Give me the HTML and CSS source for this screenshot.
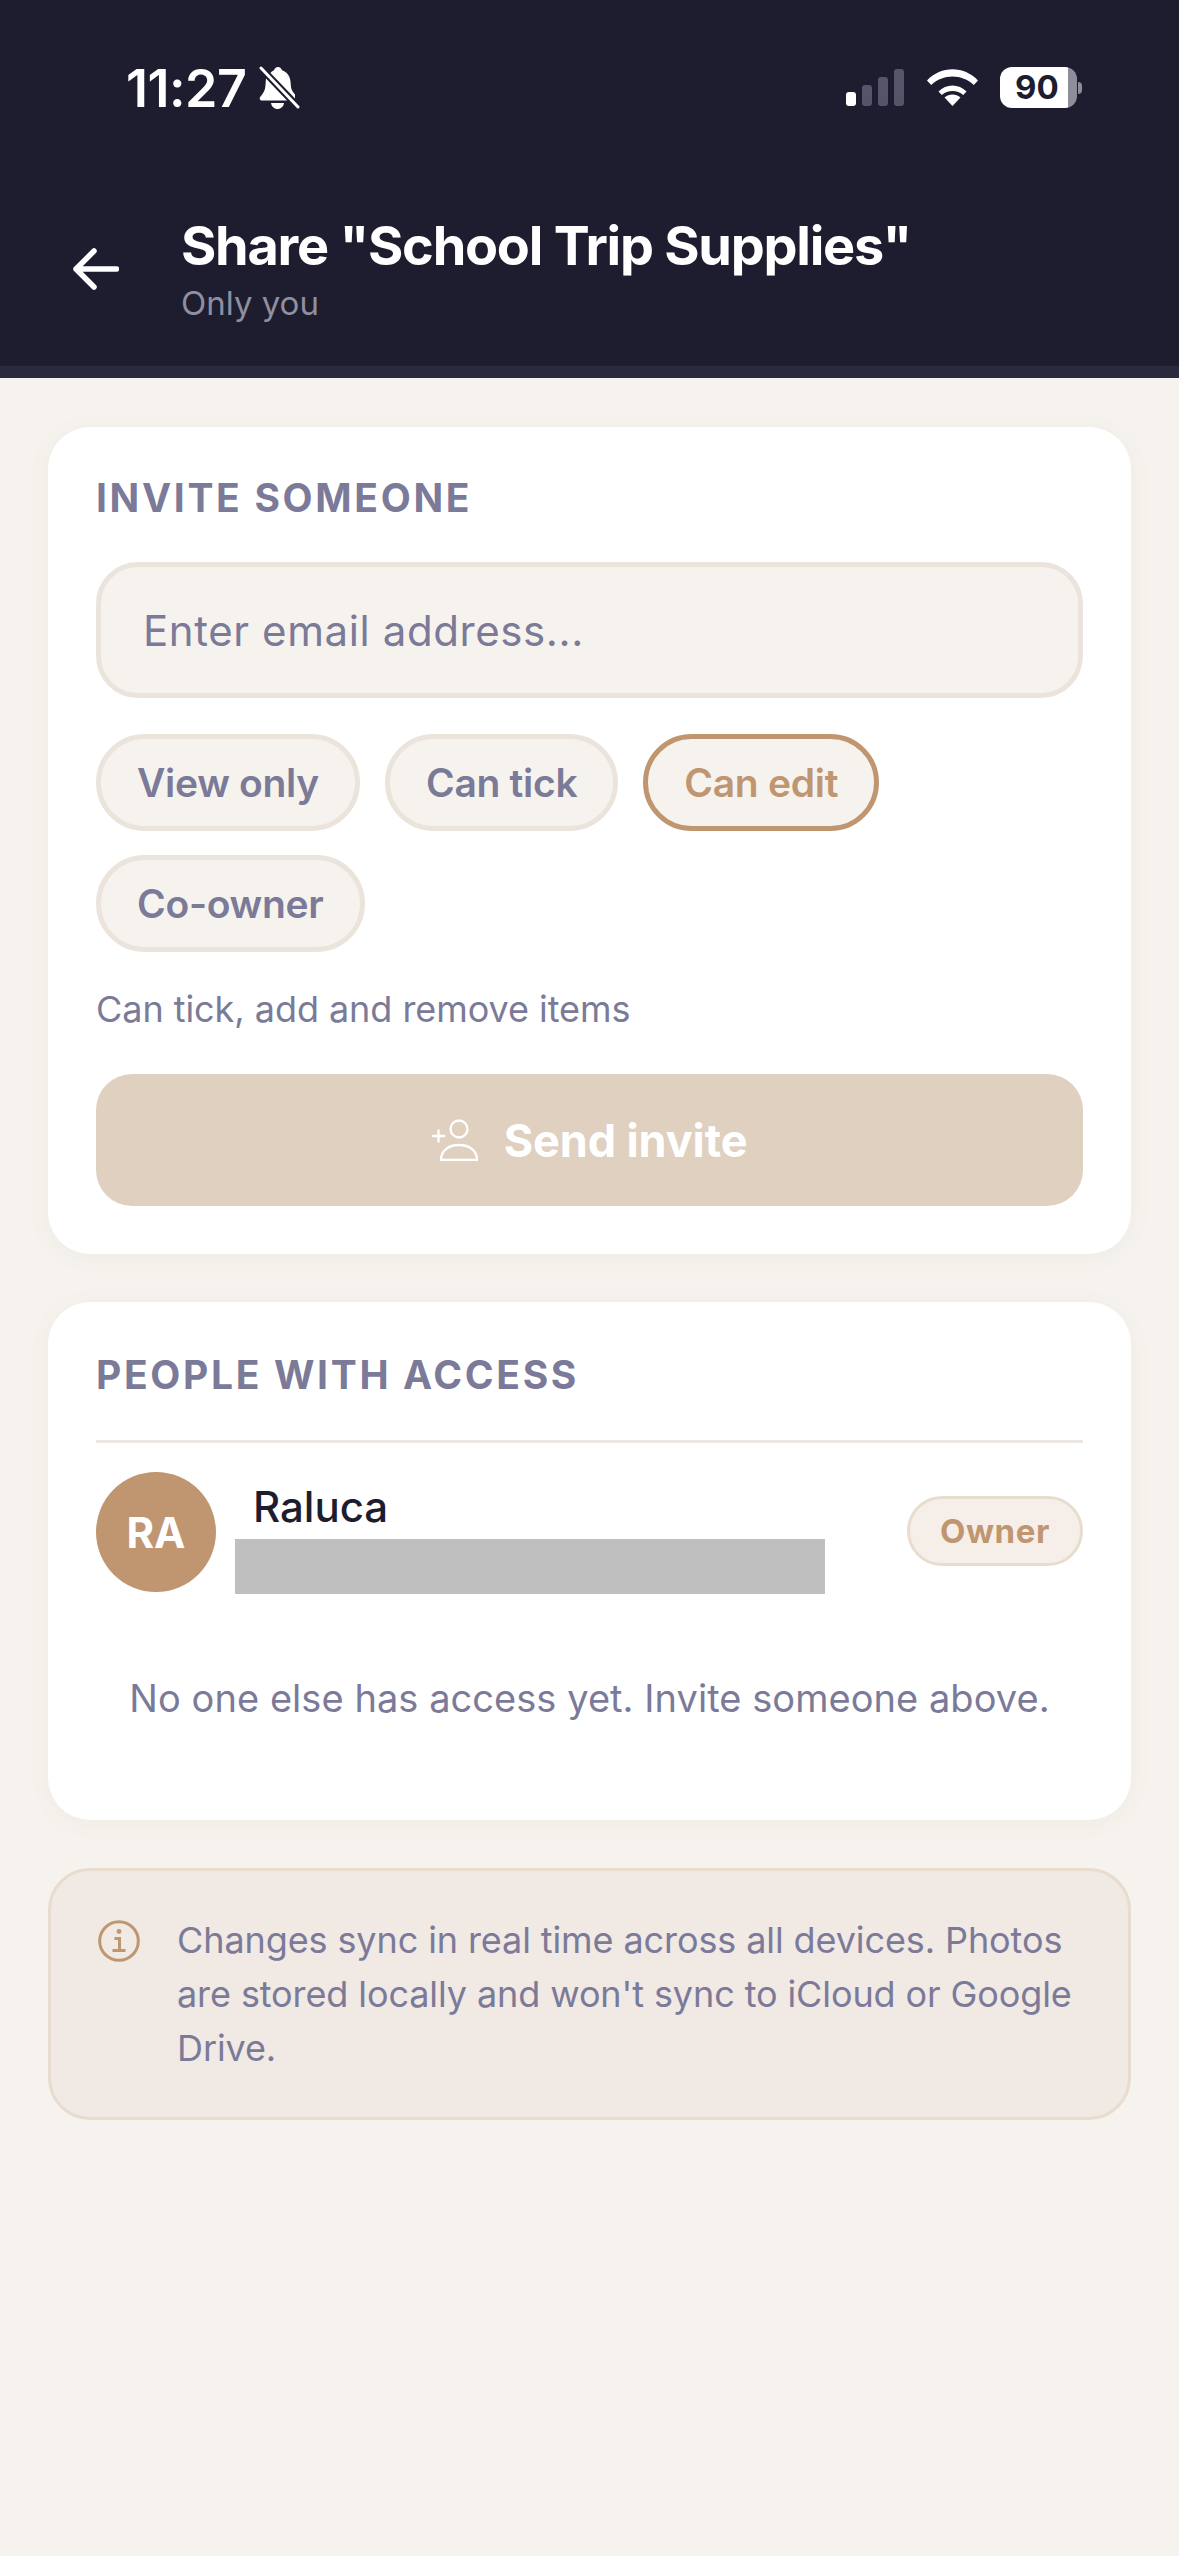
FILE: index.html
```html
<!DOCTYPE html>
<html lang="en">
<head>
<meta charset="utf-8">
<title>Share</title>
<link rel="stylesheet" href="styles.css">
</head>
<body>
<header class="top">
  <div class="status">
    <div class="status-left">
      <span class="time">11:27</span>
      <svg class="bell" width="42" height="44" viewBox="0 0 42 44">
        <path d="M12.500 7C13.500 5.500 15 4.600 16 4.200 16.500 2.400 18 1 20 1c2 0 3.500 1.400 4 3.200C29 5.800 32 10 32.500 15.500L33 21c.3 3 2 5 4 7.500v4z" fill="#fff"/>
        <path d="M8 12.500 29 34.500H4c-2 0-3-2-1.800-3.500C5 27.500 7 25 7.400 20z" fill="#fff"/>
        <path d="M13 37h13c-.5 3.500-3.200 6-6.500 6s-6-2.500-6.500-6z" fill="#fff"/>
        <path d="M3 2 40 41" stroke="#fff" stroke-width="3" stroke-linecap="round"/>
      </svg>
    </div>
    <div class="status-right">
      <div class="signal">
        <span class="bar b1 on"></span><span class="bar b2"></span><span class="bar b3"></span><span class="bar b4"></span>
      </div>
      <svg class="wifi" width="51" height="37" viewBox="0 0 51 37">
        <path d="M25.500 37 L17.500 28.500 C22 24.500 29 24.500 33.500 28.500Z" fill="#fff"/>
        <path d="M11.500 22.500 L14.800 26 C20.500 20.500 30.500 20.500 36.200 26 L39.500 22.500 C32 14.500 19 14.500 11.500 22.500Z" fill="#fff"/>
        <path d="M0 11.500 L4.200 16 C16 4.500 35 4.500 46.800 16 L51 11.500 C37 -3.500 14 -3.500 0 11.500Z" fill="#fff"/>
      </svg>
      <div class="battery"><span class="batt-body"><span class="batt-num">90</span></span><span class="batt-tip"></span></div>
    </div>
  </div>
  <div class="nav">
    <svg class="back" width="46" height="42" viewBox="0 0 46 42">
      <path d="M43.500 21H3M21 3 3 21l18 18" fill="none" stroke="#fff" stroke-width="5.500" stroke-linecap="round" stroke-linejoin="round"/>
    </svg>
    <div class="nav-text">
      <div class="title">Share "School Trip Supplies"</div>
      <div class="subtitle">Only you</div>
    </div>
  </div>
</header>
<main class="content">
  <section class="card invite">
    <h2 class="label">INVITE SOMEONE</h2>
    <div class="input">Enter email address...</div>
    <div class="chips">
      <span class="chip">View only</span>
      <span class="chip">Can tick</span>
      <span class="chip active">Can edit</span>
      <span class="chip">Co-owner</span>
    </div>
    <p class="hint">Can tick, add and remove items</p>
    <div class="send">
      <svg class="send-icon" width="46" height="42" viewBox="0 0 46 42" fill="none" stroke="#fff" stroke-width="2.400">
        <circle cx="27" cy="10" r="8.500"/>
        <path d="M9 41c0-9 7-15 18-15s18 6 18 15z" stroke-linejoin="round"/>
        <path d="M1 17h11M6.500 11.500v11" stroke-linecap="round"/>
      </svg>
      <span>Send invite</span>
    </div>
  </section>
  <section class="card people">
    <h2 class="label">PEOPLE WITH ACCESS</h2>
    <div class="person">
      <div class="avatar">RA</div>
      <div class="person-name">Raluca</div>
      <div class="redacted"></div>
      <span class="badge">Owner</span>
    </div>
    <p class="empty">No one else has access yet. Invite someone above.</p>
  </section>
  <aside class="note">
    <svg class="info" width="42" height="42" viewBox="0 0 42 42" fill="none" stroke="#c09670">
      <circle cx="21" cy="21" r="19.300" stroke-width="3"/>
      <circle cx="21" cy="11.500" r="2.400" fill="#c09670" stroke="none"/>
      <path d="M16.500 18.500h5v12M14.500 30.500h13" stroke-width="3"/>
    </svg>
    <p class="note-text">Changes sync in real time across all devices. Photos are stored locally and won't sync to iCloud or Google Drive.</p>
  </aside>
</main>
</body>
</html>
```
FILE: styles.css
```css
* { box-sizing: border-box; }
html, body { margin: 0; padding: 0; }
body {
  width: 1179px;
  height: 2556px;
  background: #f6f3ee;
  font-family: Inter, "Liberation Sans", sans-serif;
  overflow: hidden;
}
.top {
  height: 378px;
  background: #1d1d2f;
  border-bottom: 12px solid #2a2a3d;
  color: #fff;
}
.status {
  display: flex;
  justify-content: space-between;
  align-items: flex-start;
  padding: 67px 97px 0 126px;
  height: 190px;
}
.status-left { display: flex; align-items: center; gap: 12px; }
.time { font-size: 52px; font-weight: 600; line-height: 44px; letter-spacing: -.5px; }
.bell { margin-top: -2px; }
.status-right { display: flex; align-items: flex-start; }
.signal { display: flex; align-items: flex-end; gap: 6px; height: 37px; margin-top: 2px; margin-right: 23px; }
.bar { width: 10px; border-radius: 3px; background: #55556a; }
.bar.on { background: #fff; }
.b1 { height: 14px; }
.b2 { height: 21px; }
.b3 { height: 29px; }
.b4 { height: 37px; }
.wifi { margin-top: 2px; margin-right: 22px; }
.battery { display: flex; align-items: center; height: 41px; }
.batt-body {
  width: 77px;
  height: 41px;
  border-radius: 12px;
  background: linear-gradient(to right, #fff 0, #fff 68px, #8e8e9b 68px);
  display: flex;
  align-items: center;
  padding-left: 15px;
}
.batt-num { font-size: 33px; font-weight: 700; color: #1d1d2f; line-height: 41px; }
.batt-tip { width: 4px; height: 12px; margin-left: 1px; border-radius: 0 6px 6px 0; background: #8e8e9b; }
.nav { display: flex; align-items: flex-start; padding-left: 73px; }
.back { margin-top: 58px; flex: none; }
.nav-text { margin-left: 62px; }
.title { font-size: 54px; font-weight: 700; line-height: 66px; letter-spacing: -1.250px; white-space: nowrap; margin-top: 23px; }
.subtitle { font-size: 33px; line-height: 42px; color: #8f8f9f; margin-top: 3px; }
.content { display: flex; flex-direction: column; gap: 48px; padding: 49px 48px 0; }
.card {
  background: #fff;
  border-radius: 42px;
  padding: 48px;
  box-shadow: 0 3px 24px rgba(90, 70, 50, .05);
}
.invite { padding-top: 49px; }
.label {
  margin: 0;
  font-size: 39px;
  font-weight: 700;
  line-height: 44px;
  letter-spacing: 2.670px;
  color: #7b7a98;
}
.input {
  margin-top: 42px;
  height: 136px;
  border: 5px solid #ebe4dd;
  border-radius: 42px;
  background: #f6f3ee;
  padding-left: 42px;
  display: flex;
  align-items: center;
  font-size: 42px;
  letter-spacing: .6px;
  color: #7b7a98;
}
.chips { display: flex; flex-wrap: wrap; gap: 24px 25px; margin-top: 36px; width: 800px; }
.chip {
  height: 97px;
  padding: 0 36px;
  border: 5px solid #ebe4dd;
  border-radius: 49px;
  background: #f6f3ee;
  display: flex;
  align-items: center;
  font-size: 39px;
  font-weight: 600;
  letter-spacing: -.3px;
  color: #7b7a98;
}
.chip.active { border-color: #c09670; color: #c09670; }
.hint { margin: 35px 0 0; font-size: 36px; line-height: 44px; letter-spacing: -.05px; color: #7b7a98; }
.send {
  margin-top: 43px;
  height: 132px;
  border-radius: 36px;
  background: #e0d0bf;
  display: flex;
  align-items: center;
  justify-content: center;
  gap: 26px;
  color: #fff;
  font-size: 45px;
  font-weight: 700;
  letter-spacing: -.1px;
}
.people { height: 518px; padding-top: 51px; }
.person {
  position: relative;
  display: flex;
  align-items: flex-start;
  margin-top: 43px;
  padding-top: 29px;
  border-top: 3px solid #ebe6e1;
  height: 152px;
}
.avatar {
  width: 120px;
  height: 120px;
  border-radius: 50%;
  background: #c09670;
  color: #fff;
  font-size: 42px;
  font-weight: 700;
  display: flex;
  align-items: center;
  justify-content: center;
  flex: none;
}
.person-name { margin-left: 37px; margin-top: 9px; font-size: 42px; font-weight: 500; line-height: 52px; color: #1d1d2f; }
.redacted { position: absolute; left: 139px; top: 96px; width: 590px; height: 55px; background: #bfbfbf; }
.badge {
  margin-left: auto;
  margin-top: 24px;
  height: 70px;
  width: 176px;
  justify-content: center;
  border: 3px solid #e8dccf;
  border-radius: 35px;
  background: #f6efe9;
  display: flex;
  align-items: center;
  font-size: 33px;
  font-weight: 700;
  letter-spacing: .6px;
  color: #c09670;
}
.empty { margin: 81px 0 0; text-align: center; font-size: 38px; line-height: 50px; letter-spacing: .05px; color: #7b7a98; white-space: nowrap; }
.note {
  display: flex;
  align-items: flex-start;
  gap: 37px;
  height: 252px;
  padding: 48px 30px 0 47px;
  border: 3px solid #e8dccf;
  border-radius: 42px;
  background: #f0e9e4;
}
.info { flex: none; margin-top: 1px; }
.note-text { margin: -6px 0 0; font-size: 36px; line-height: 54px; letter-spacing: -.1px; color: #7b7a98; }
```
